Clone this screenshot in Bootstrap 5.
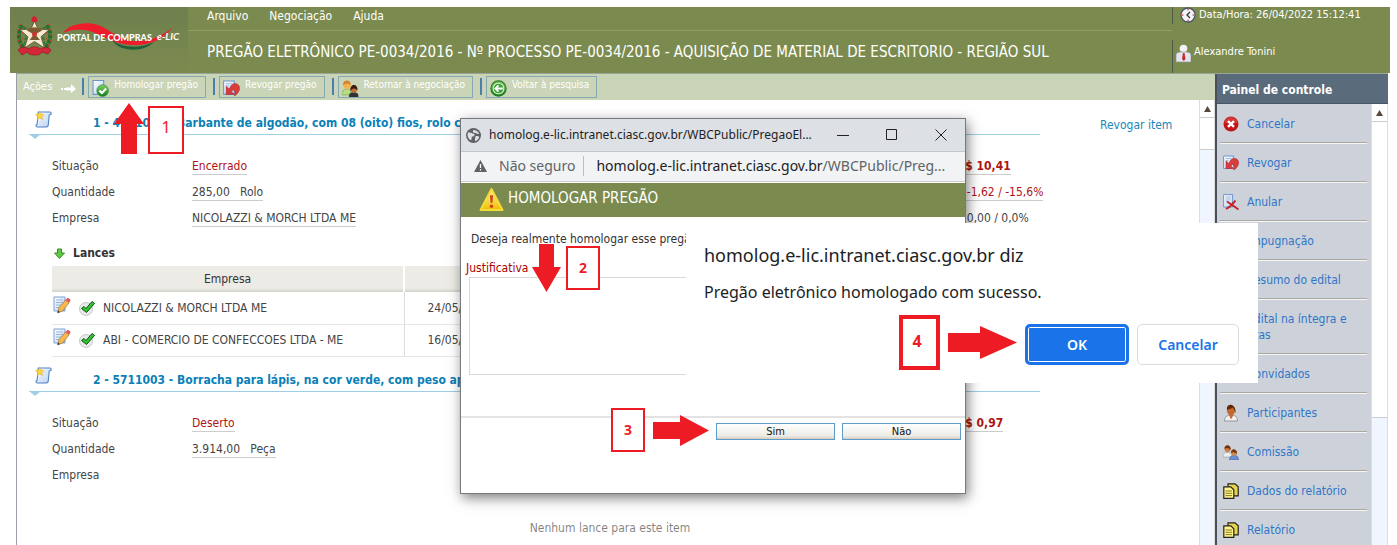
<!DOCTYPE html>
<html lang="pt-BR">
<head>
<meta charset="utf-8">
<meta name="viewport" content="width=device-width, initial-scale=1">
<title>Portal de Compras e-LIC</title>
<link href="https://cdn.jsdelivr.net/npm/bootstrap@5.3.0/dist/css/bootstrap.min.css" rel="stylesheet">
<style>
  body { font-family: "DejaVu Sans Condensed", "Noto Sans", sans-serif; font-size: 12px; line-height: 16px; color: #444; background: #fff; }
  a { text-decoration: none; }
  .page { padding: 7px 7px 0 10px; }
  .top { background: #7b8b4f; color: #fff; height: 66px; }
  .top a { color: #fff; }
  .brand-area { width: 178px; background: linear-gradient(#6f7f4e, #7b8b4f); }
  .menu { height: 24px; padding: 1px 19px 0; gap: 21px; border-bottom: 1px solid #90a062; }
  .headline { font-size: 15px; line-height: 22px; font-weight: 400; color: #fff; padding: 10px 19px 0; }
  .status-area { width: 218px; font-size: 11px; }
  .status-area > div { height: 33px; gap: 3px; }
  .status-area .tick { width: 1px; background: #4f5b48; }
  .frame { margin: 0 2px 0 6px; border-left: 1px solid #999ea8; border-top: 1px solid #9aa59a; }
  .toolbar { background: #cad5b7; height: 26px; color: #fff; padding: 2px 0 3px 6px; font-size: 11px; }
  .tool-sep { width: 2px; height: 17px; background: #4a7db0; margin: 0 4px 0 7px; }
  .tool-sep.first { margin-left: 5px; }
  .tool { font-size: 10px; line-height: 14px; color: #fff; background: transparent; border: 1px solid #85a9b4; height: 22px; padding: 1px 7px 0 3px; gap: 5px; white-space: nowrap; }
  .tool svg { margin-top: 2px; }
  .scroll-rail { background: #eff6ff; flex: none; border: 1px solid #ddd; border-width: 0 1px; }
  .rail-btn { height: 18px; border: 0; border-bottom: 1px solid #ccc; background: #fff; padding: 0; width: 100%; }
  .rail-btn svg { display: block; margin: auto; fill: #55483c; }
  .rail-thumb { background: #fff; border-bottom: 1px solid #ccc; }
  .sheet { padding: 0 0 0 12px; }
  .item-head { height: 35px; width: 1011px; border-bottom: 1px solid #9fcfe5; position: relative; }
  .item-head::after { content: ""; position: absolute; left: 0; top: 34px; border: 6px solid transparent; border-top: 5px solid #9fcfe5; border-bottom: 0; }
  .item-title { font-size: 12px; line-height: 16px; font-weight: 700; color: #0a80b8; margin: 0; padding: 8px 0 0 41px; white-space: nowrap; }
  .item-head svg { margin: 4px 0 0 6px; }
  .revoke { color: #1a86b8; padding: 17px 0 0 60px; }
  .facts { padding: 18px 0 0 23px; margin: 0; width: 1040px; }
  .facts > div { height: 26px; line-height: 26px; }
  .facts dt { width: 140px; font-weight: 400; }
  .facts dd { margin: 0; }
  .facts dd.main-val { width: 757px; }
  .facts span { display: inline-block; line-height: 15px; border-bottom: 1px solid #ccc; white-space: pre; }
  .facts .no-line { border: 0; }
  .alert-red { color: #b01414; }
  .lances { padding: 14px 0 5px 25px; font-weight: 700; color: #333; }
  .bids { width: 988px; margin: 0 0 0 23px; table-layout: fixed; }
  .bids th { font-weight: 400; text-align: center; background: linear-gradient(#ecebe6 86%, #d2d1c8); height: 26px; padding: 0; border-right: 2px solid #fff; color: #333; }
  .bids td { height: 32px; border-bottom: 1px solid #e6e6e6; border-right: 1px solid #ddd; padding: 0; vertical-align: middle; color: #444; }
  .bids td:last-child { border-right: 0; padding-left: 23px; }
  .bids td:first-child { padding-left: 1px; }
  .bids .edit-icon { margin-bottom: 6px; }
  .side { width: 173px; flex: none; border-left: 2px solid #4a4f5c; }
  .side-title { background: #5a6b7b; color: #fff; font-size: 12px; line-height: 16px; font-weight: 700; height: 30px; padding: 8px 0 0 5px; margin: 0; border-bottom: 1px solid #46556a; }
  .side-list { background: #cdd2da; padding: 1px 4px 0 3px; }
  .side-list a { color: #2f76c8; min-height: 37px; padding: 0 0 0 3px; gap: 8px; }
  .side-list li { border-bottom: 1px solid #aba99f; box-shadow: 0 1px #f5f5f5; margin-bottom: 1px; }
  .side-list a.tall { min-height: 53px; }
  .popup { left: 460px; top: 118px; width: 506px; height: 376px; background: #fff; border: 1px solid #75787d; box-shadow: 2px 4px 12px rgba(0,0,0,.5); z-index: 2; font-family: "Noto Sans", "DejaVu Sans", sans-serif; }
  .popup-bar { background: #dde0e5; height: 33px; color: #222; font-size: 12px; padding: 0 0 0 5px; border-bottom: 1px solid #c4c7cb; }
  .popup-bar button { background: none; border: 0; padding: 0; width: 49px; line-height: 12px; flex: none; }
  .address { background: #f1f3f4; height: 30px; border-bottom: 1px solid #ccc; font-size: 14px; color: #202124; padding: 0 14px 1px 13px; }
  .address .dim { color: #5f6368; }
  .popup-title { background: #7b8b4f; color: #fff; height: 34px; font: 400 15px/22px "DejaVu Sans Condensed", sans-serif; padding: 0 0 0 18px; margin: 1px 0 0; }
  .popup-form { font-family: "DejaVu Sans Condensed", sans-serif; }
  .popup-form p { padding: 14px 0 0 10px; margin: 0 0 13px; color: #333; font-size: 12px; }
  .popup-form label { color: #a00; padding-left: 5px; display: block; font-size: 12px; }
  .popup-form textarea { display: block; width: 488px; height: 98px; margin: 1px 0 41px 8px; border: 1px solid #d8d8d8; resize: none; }
  .popup-foot { border-top: 2px solid #e3e3e3; padding: 5px 4px 0 0; gap: 7px; }
  .classic { width: 119px; height: 17px; border: 1px solid #5e9bc8; background: linear-gradient(#fff, #ecebe5 80%, #d3cdc2); font-size: 11px; line-height: 14px; padding: 0; color: #111; }
  .js-alert { left: 686px; top: 223px; width: 572px; height: 160px; z-index: 3; background: #fff; color: #202124; padding: 20px 19px 0 18px; font-family: "Noto Sans", sans-serif; }
  .js-alert h2 { font-size: 18px; line-height: 24px; font-weight: 400; margin: 0 0 14px; }
  .js-alert p { font-size: 16px; line-height: 22px; margin: 0 0 21px; }
  .js-alert .btn { font-size: 14px; line-height: 20px; font-weight: 600; height: 41px; border-radius: 5px; width: 102px; padding: 0; }
  .js-alert .btn-ok { background: #1a73e8; color: #fff; box-shadow: inset 0 0 0 1px #fff; border: 3px solid #1a73e8; width: 104px; }
  .js-alert .btn-no { background: #fff; color: #1a73e8; border: 1px solid #dadce0; }
  .step { position: absolute; z-index: 4; border: 2px solid #ed1c24; background: #fff; color: #ed1c24; font: 700 14px "Noto Sans", sans-serif; display: flex; align-items: center; justify-content: center; width: 34px; height: 44px; padding-bottom: 2px; }
  .pointer { position: absolute; z-index: 4; fill: #ed1c24; }
  .s1 { left: 148px; top: 106px; width: 36px; height: 48px; padding-bottom: 6px; font-weight: 400; font-size: 16px; }
  .s2 { left: 566px; top: 246px; } .s3 { left: 611px; top: 408px; }
  .s4 { left: 899px; top: 315px; width: 41px; height: 55px; border-width: 4px; font-size: 16px; padding: 0 5px 4px 0; }
  .p1 { left: 114px; top: 103px; } .p2 { left: 532px; top: 244px; } .p3 { left: 653px; top: 415px; } .p4 { left: 948px; top: 326px; }
</style>
</head>
<body>
<svg width="0" height="0" class="position-absolute" aria-hidden="true">
  <defs>
    <linearGradient id="gGreen" x2="0" y2="1"><stop stop-color="#7fd067"/><stop offset="1" stop-color="#13801c"/></linearGradient>
    <linearGradient id="gDoc" x2="1" y2="1"><stop stop-color="#fff"/><stop offset="1" stop-color="#b7d0f4"/></linearGradient>
    <linearGradient id="gYel" x2="0" y2="1"><stop stop-color="#fff6a0"/><stop offset="1" stop-color="#efbe00"/></linearGradient>
  </defs>
  <symbol id="doc" viewBox="0 0 16 16"><path d="M1 1h10v12H1z" fill="url(#gDoc)" stroke="#6d94ce"/><path d="M3 4h6M3 6h6M3 8h6M3 10h4" stroke="#a5bde0"/></symbol>
  <symbol id="doc-ok" viewBox="0 0 16 16"><path d="M1 .5h10v13H1z" fill="url(#gDoc)" stroke="#6d94ce"/><circle cx="10" cy="10" r="5.500" fill="url(#gGreen)" stroke="#18811f" stroke-width=".5"/><path d="M7 10l2.300 2.300 4-4.300" fill="none" stroke="#fff" stroke-width="2"/></symbol>
  <symbol id="doc-undo" viewBox="0 0 16 16"><path d="M.6 1h10v12.500H.6z" fill="url(#gDoc)" stroke="#6d94ce"/><path d="M2.500 3.500h6M2.500 5.500h3" stroke="#a5bde0"/><path d="M3 6v7.500h7.500L8 11c1-2.500 4.500-2.500 2.800 4 6.700-4 6-12.500-.3-11.500C8.500 3.800 7 5.500 6 8.500z" fill="#d93c3c" stroke="#a81818" stroke-width=".5"/></symbol>
  <symbol id="doc-x" viewBox="0 0 16 16"><path d="M.6 .6h9v12.500h-9z" fill="url(#gDoc)" stroke="#6d94ce"/><path d="M2.500 3h5M2.500 5h5M2.500 7h3" stroke="#a5bde0"/><path d="M3 15c3-1.500 7-5 9.500-8.500M4 7.500c3 2 7 4.500 11.500 8" stroke="#c82020" stroke-width="1.900" fill="none"/></symbol>
  <symbol id="back" viewBox="0 0 16 16"><circle cx="8" cy="8" r="7.200" fill="url(#gGreen)" stroke="#2a7b24"/><circle cx="8" cy="8" r="5" fill="#3ea038" stroke="#d8f0d0"/><path d="M12 8H5M8 5L5 8l3 3" stroke="#fff" stroke-width="1.700" fill="none"/></symbol>
  <symbol id="man" viewBox="0 0 16 18"><path d="M1.500 17c0-4 2.500-6 6.500-6s6.500 2 6.500 6z" fill="#f0f0f0" stroke="#777" stroke-width=".7"/><path d="M6 11l2 4.500 2.500-4.500z" fill="#c56b2d"/><ellipse cx="8" cy="6.500" rx="4" ry="5" fill="#c4692c"/><path d="M4 6C2.500-1.500 13.500-1.500 12.500 9 11.500 6.500 11 4.500 9.500 3.500 8 5.500 6 4.500 4 6z" fill="#5f2809"/></symbol>
  <symbol id="pair" viewBox="0 0 16 16"><path d="M0 13c0-4 2-4.500 4.500-4.500S9 9 9 13z" fill="#eee" stroke="#888" stroke-width=".5"/><circle cx="4.500" cy="5" r="3" fill="#d07a38"/><path d="M1.500 5C1 0 8.500 0 7.500 6 6 4 4 3 1.500 5z" fill="#6b3210"/><path d="M6.500 16c0-4 2-4.500 4.500-4.500s4.500.5 4.500 4.500z" fill="#6b8fd0" stroke="#3b5a99" stroke-width=".5"/><circle cx="11" cy="9" r="2.800" fill="#d88a48"/><path d="M8 9c-.5-5 6.500-5 6 1-1.500-1-3-3-6-1z" fill="#7a3a14"/></symbol>
  <symbol id="pair-dark" viewBox="0 0 16 16"><path d="M0 14c0-4 2-5.500 4.500-5.500S9 10 9 14z" fill="#b5dd86" stroke="#6d9945" stroke-width=".5"/><circle cx="4.800" cy="5" r="3.500" fill="#f3b24c"/><path d="M1 5C.5-1 9-1 8 5 6 3 4 2.500 1 5z" fill="#d1812a"/><path d="M6.500 16c0-4 2-4.500 4.500-4.500s4.500.5 4.500 4.500z" fill="#333"/><circle cx="11" cy="9" r="3" fill="#bf6e38"/><path d="M8 10c-1-7 7.500-7 6.500 0-1.500-2-3.500-3-6.500 0z" fill="#3a1d0c"/></symbol>
  <symbol id="scroll" viewBox="0 0 16 16"><path d="M3 1h11c1.700 0 1.700 2.500 0 2.500h-.6L12.500 13c0 1.300-.8 2-2 2H2c-1.500 0-1.300-2.500 0-2.500z" fill="url(#gDoc)" stroke="#4d82c4"/><path d="M6 5h5M5 7.500h6M5 10h5" stroke="#d3e3fa"/><path d="M4.500 .5l1.200 2.500 2.800.3-2 2 .6 2.700-2.600-1.400L2 8l.5-2.700-2-2 2.800-.3z" fill="#ffd53e" stroke="#e2a614" stroke-width=".4"/></symbol>
  <symbol id="edit" viewBox="0 0 18 18"><path d="M1 1h11v14H1z" fill="url(#gDoc)" stroke="#7d9fd4"/><path d="M3 4h7M3 6.500h7M3 9h5M3 11.500h3" stroke="#9db8e0"/><path d="M4.500 17L6 11.500 12.500 4l3.500 3-6.500 8z" fill="#f5b84c" stroke="#94651c" stroke-width=".6"/><path d="M12.500 4l1.500-1.800c1.300-1 4 1 3.300 2.500L16 7z" fill="#e45b5b"/><path d="M4.500 17l.6-2.500 1.900 1.500z" fill="#333"/></symbol>
  <symbol id="check" viewBox="0 0 16 16"><circle cx="7" cy="9" r="6.500" fill="#e9e9e9" stroke="#c8c8c8"/><path d="M2.500 8.500L5 6.500l2 2L13 1.500 15.500 3.500 7.500 12.500z" fill="#2cc431" stroke="#0b5413"/></symbol>
  <symbol id="copies" viewBox="0 0 16 16"><path d="M5 .8h7l3.200 3v9H5z" fill="#e9d54d" stroke="#222" stroke-width="1.200"/><path d="M.8 3.800h7l3 3v8.500H.8z" fill="#fff48a" stroke="#222" stroke-width="1.200"/><path d="M2.500 8h6.500M2.500 10.300h6.500M2.500 12.600h6.500" stroke="#8a7a20"/></symbol>
  <symbol id="stop" viewBox="0 0 16 16"><circle cx="8" cy="8" r="7.500" fill="#c01818"/><path d="M8 1a7 7 0 0 1 6.500 6H1.500A7 7 0 0 1 8 1z" fill="#dd5050" opacity=".6"/><path d="M5 5.200l6 5.600M11 5.200l-6 5.600" stroke="#fff" stroke-width="2.400"/></symbol>
  <symbol id="warn" viewBox="0 0 24 24"><path d="M12 2L1.500 22h21z" fill="url(#gYel)" stroke="#f6d93a" stroke-width="2" stroke-linejoin="round"/><path d="M10.500 8h3l-.6 7h-1.800z" fill="#d2401c"/><circle cx="12" cy="18.500" r="1.700" fill="#d2401c"/></symbol>
  <symbol id="up" viewBox="0 0 7 6"><path d="M3.500 0L7 6H0z"/></symbol>
</svg>

<div class="page vh-100 overflow-hidden d-flex flex-column position-relative">
  <header class="top d-flex flex-shrink-0">
    <div class="brand-area flex-shrink-0">
      <svg width="178" height="66" viewBox="0 0 178 66" role="img" aria-label="Portal de Compras e-LIC">
        <g fill="none" stroke="#1f6a2d" stroke-width="4"><path d="M12 18C7 26 8 36 15 43M37 18c5 8 4 18-3 25" stroke-dasharray="4 1"/></g>
        <path d="M11 17C6 26 7 36 14 43M38 17c5 9 4 19-3 26M15 20c-3 5-3 12-1 17M34 20c3 5 3 12 1 17" fill="none" stroke="#d63a2c" stroke-width="1.500" stroke-dasharray="1.500 4"/>
        <path d="M9 19l9 3-4 17M40 19l-9 3 4 17" fill="none" stroke="#2c7a36" stroke-width="2" stroke-dasharray="3 1.500"/>
        <path d="M24.500 14l3.500 8 11 .8-8 7 3.500 11.200-10-6.500-10 6.500 3.500-11.200-8-7 11-.8z" fill="#f3ead0" stroke="#5b4a2c" stroke-width=".8"/>
        <path d="M17 23c3-3 12-3 15 0l-5 3h-5zM20 33l4.500-6 5 6" fill="#7a5a33" stroke="#8a6a3a"/><circle cx="24.500" cy="27" r="2.500" fill="#c4372e"/>
        <path d="M21.500 15c-.5-5 2-7 4.500-5 1.500 1 1.500 3 1 5z" fill="#d3202c"/>
        <path d="M8 43c3-4 8-3 11-1 2-3 9-3 11 0 4-2 9-2 11 1l-3 4-6-2c-2 3-4 3-7 3s-6 0-8-3l-5 3z" fill="#d3273a" stroke="#8c1520" stroke-width=".6"/>
        <path d="M102 33c10 8 28 9 42 2-12 12-36 9-42-2z" fill="#1f5f3a"/>
        <path d="M53 26C59 17 76 14 88 18c13 5 22 16 38 16 16 0 28-6 37-14-8 11-22 19-41 18-22-1-30-12-47-15-9-1-16 0-22 3z" fill="#ef1c2c"/>
        <text x="47" y="34" font-family="Lato, sans-serif" font-weight="900" font-size="9" fill="#fff">PORTAL DE COMPRAS</text>
        <text x="147" y="33" font-family="Lato, sans-serif" font-style="italic" font-weight="700" font-size="10" fill="#fff">e-LIC</text>
      </svg>
    </div>
    <div class="flex-grow-1 overflow-hidden">
      <nav class="menu d-flex"><a href="#">Arquivo</a><a href="#">Negociação</a><a href="#">Ajuda</a></nav>
      <h1 class="headline text-nowrap mb-0">PREGÃO ELETRÔNICO PE-0034/2016 - Nº PROCESSO PE-0034/2016 - AQUISIÇÃO DE MATERIAL DE ESCRITORIO - REGIÃO SUL</h1>
    </div>
    <div class="status-area flex-shrink-0">
      <div class="d-flex"><span class="tick mb-3"></span>
        <svg class="ms-1" width="16" height="16" viewBox="0 0 16 16"><circle cx="8" cy="8" r="7" fill="#f4f4f8" stroke="#4c5568" stroke-width="1.300"/><path d="M10 5L7 8l3 3" fill="none" stroke="#333" stroke-width="1.300"/><g fill="#d33"><circle cx="8" cy="2.800" r=".8"/><circle cx="8" cy="13.200" r=".8"/><circle cx="2.800" cy="8" r=".8"/><circle cx="13.200" cy="8" r=".8"/></g></svg>
        <span>Data/Hora: 26/04/2022 15:12:41</span></div>
      <div class="d-flex"><span class="tick"></span>
        <svg class="mt-1" width="15" height="19" viewBox="0 0 15 19"><circle cx="7.500" cy="4.500" r="3.800" fill="#f1f1f6"/><path d="M0 18V11c0-2 2-3 4.500-3h6C13 8 15 9 15 11v7z" fill="#e4e4ec" stroke="#8a8f92" stroke-width=".6"/><path d="M7 9h1.500l1 6-1.700 2L6 15z" fill="#c22838"/></svg>
        <span class="mt-1">Alexandre Tonini</span></div>
    </div>
  </header>

  <div class="frame d-flex flex-grow-1 overflow-hidden">
    <div class="flex-grow-1 d-flex flex-column overflow-hidden">
      <div class="toolbar d-flex align-items-center flex-shrink-0">
        <span>Ações</span>
        <svg class="ms-2" width="17" height="12" viewBox="0 0 17 12"><path d="M1 7h2v2H1zM4 7h2v2H4zM6 6.500h5V3l5 5-5 4V9.500H6z" fill="#fff"/></svg>
        <span class="tool-sep first"></span><button type="button" class="tool d-flex"><svg width="17" height="17"><use href="#doc-ok"/></svg>Homologar pregão</button>
        <span class="tool-sep"></span><button type="button" class="tool d-flex"><svg width="17" height="17"><use href="#doc-undo"/></svg>Revogar pregão</button>
        <span class="tool-sep"></span><button type="button" class="tool d-flex"><svg width="17" height="17"><use href="#pair-dark"/></svg>Retornar à negociação</button>
        <span class="tool-sep"></span><button type="button" class="tool d-flex"><svg width="17" height="17"><use href="#back"/></svg>Voltar à pesquisa</button>
      </div>
      <div class="d-flex flex-grow-1 overflow-hidden">
        <main class="sheet flex-grow-1 overflow-hidden">
          <div class="d-flex">
            <div class="item-head d-flex align-items-center flex-shrink-0"><svg width="17" height="17"><use href="#scroll"/></svg>
              <h2 class="item-title mt-1">1 - 4511003 - Barbante de algodão, com 08 (oito) fios, rolo com 500</h2></div>
            <a class="revoke text-nowrap" href="#">Revogar item</a>
          </div>
          <dl class="facts">
            <div class="d-flex"><dt>Situação</dt><dd class="main-val"><span class="alert-red">Encerrado</span></dd><dd class="alert-red fw-bold ps-2"><span>R$ 10,41</span></dd></div>
            <div class="d-flex"><dt>Quantidade</dt><dd class="main-val"><span>285,00   Rolo</span></dd><dd class="alert-red text-nowrap"><span>R$ -1,62 / -15,6%</span></dd></div>
            <div class="d-flex"><dt>Empresa</dt><dd class="main-val"><span>NICOLAZZI &amp; MORCH LTDA ME</span></dd><dd><span class="no-line">R$ 0,00 / 0,0%</span></dd></div>
          </dl>
          <div class="lances d-flex align-items-center gap-2"><svg width="11" height="11" viewBox="0 0 11 11"><path d="M3.500 1h4v4h3l-5 5.500L.5 5h3z" fill="#5fc943" stroke="#35912a"/></svg>Lances</div>
          <table class="bids">
            <colgroup><col width="352"><col></colgroup>
            <thead><tr><th scope="col">Empresa</th><th scope="col" aria-label="Data"></th></tr></thead>
            <tbody>
              <tr><td><div class="d-flex align-items-center gap-2"><svg width="18" height="18" class="edit-icon"><use href="#edit"/></svg><svg width="16" height="16"><use href="#check"/></svg>NICOLAZZI &amp; MORCH LTDA ME</div></td><td>24/05/2016</td></tr>
              <tr><td><div class="d-flex align-items-center gap-2"><svg width="18" height="18" class="edit-icon"><use href="#edit"/></svg><svg width="16" height="16"><use href="#check"/></svg>ABI - COMERCIO DE CONFECCOES LTDA - ME</div></td><td>16/05/2016</td></tr>
            </tbody>
          </table>
          <div class="item-head d-flex align-items-center"><svg width="17" height="17"><use href="#scroll"/></svg>
            <h2 class="item-title mt-1">2 - 5711003 - Borracha para lápis, na cor verde, com peso aproximado</h2></div>
          <dl class="facts">
            <div class="d-flex"><dt>Situação</dt><dd class="main-val"><span class="alert-red">Deserto</span></dd><dd class="alert-red fw-bold ps-2"><span>R$ 0,97</span></dd></div>
            <div class="d-flex"><dt>Quantidade</dt><dd class="main-val"><span>3.914,00   Peça</span></dd></div>
            <div class="d-flex"><dt>Empresa</dt></div>
          </dl>
          <p class="text-center mt-4 pt-2 pe-2 text-black-50">Nenhum lance para este item</p>
        </main>
        <div class="scroll-rail" style="width:16px"><button type="button" class="rail-btn d-block" aria-label="Rolar para cima"><svg width="7" height="6"><use href="#up"/></svg></button><div class="rail-thumb" style="height:32px"></div></div>
      </div>
    </div>
    <aside class="side d-flex flex-column">
      <h2 class="side-title flex-shrink-0">Painel de controle</h2>
      <div class="d-flex flex-grow-1 overflow-hidden">
        <ul class="side-list list-unstyled mb-0 flex-grow-1">
          <li><a class="d-flex align-items-center" href="#"><svg class="flex-shrink-0" width="16" height="16"><use href="#stop"/></svg>Cancelar</a></li>
          <li><a class="d-flex align-items-center" href="#"><svg class="flex-shrink-0" width="16" height="16"><use href="#doc-undo"/></svg>Revogar</a></li>
          <li><a class="d-flex align-items-center" href="#"><svg class="flex-shrink-0" width="16" height="16"><use href="#doc-x"/></svg>Anular</a></li>
          <li><a class="d-flex align-items-center" href="#"><svg class="flex-shrink-0" width="16" height="16"><use href="#doc"/></svg>Impugnação</a></li>
          <li><a class="d-flex align-items-center" href="#"><svg class="flex-shrink-0" width="16" height="16"><use href="#doc"/></svg>Resumo do edital</a></li>
          <li><a class="d-flex align-items-center tall" href="#"><svg class="flex-shrink-0" width="16" height="16"><use href="#doc"/></svg><span>Edital na íntegra e<br>Atas</span></a></li>
          <li><a class="d-flex align-items-center" href="#"><svg class="flex-shrink-0" width="16" height="18"><use href="#man"/></svg>Convidados</a></li>
          <li><a class="d-flex align-items-center" href="#"><svg class="flex-shrink-0" width="16" height="18"><use href="#man"/></svg>Participantes</a></li>
          <li><a class="d-flex align-items-center" href="#"><svg class="flex-shrink-0" width="16" height="16"><use href="#pair"/></svg>Comissão</a></li>
          <li><a class="d-flex align-items-center" href="#"><svg class="flex-shrink-0" width="16" height="16"><use href="#copies"/></svg>Dados do relatório</a></li>
          <li><a class="d-flex align-items-center" href="#"><svg class="flex-shrink-0" width="16" height="16"><use href="#copies"/></svg>Relatório</a></li>
        </ul>
        <div class="scroll-rail" style="width:17px"><button type="button" class="rail-btn d-block" aria-label="Rolar painel para cima"><svg width="7" height="6"><use href="#up"/></svg></button><div class="rail-thumb" style="height:296px"></div></div>
      </div>
    </aside>
  </div>

  <section class="popup position-absolute" aria-label="Homologar pregão">
    <div class="popup-bar d-flex align-items-center">
      <svg class="me-2 flex-shrink-0" width="15" height="15" viewBox="0 0 16 16"><circle cx="8" cy="8" r="8" fill="#5f6368"/><path d="M2 5c3-1 4 1 6 1s1 3-1 3 0 3-2 4C2 11 1 8 2 5zM8 2c3 0 5 2 6 4-2 1-3-1-5-1S7 3 8 2zM10 9c2-1 4 0 4 1-1 2-2 3-4 4-1-2 0-3 0-5z" fill="#dfe1e5"/></svg>
      <span class="text-nowrap flex-grow-1">homolog.e-lic.intranet.ciasc.gov.br/WBCPublic/PregaoEl...</span>
      <button type="button" aria-label="Minimizar"><svg width="12" height="12"><path d="M0 6.500h12" stroke="#222"/></svg></button>
      <button type="button" aria-label="Maximizar"><svg width="12" height="12"><path d="M.5.500h10v10H.5z" fill="none" stroke="#222"/></svg></button>
      <button type="button" aria-label="Fechar"><svg width="12" height="12"><path d="M.5.500l11 11M11.500.500l-11 11" stroke="#222"/></svg></button>
    </div>
    <div class="address d-flex align-items-center text-nowrap">
      <svg class="me-2 flex-shrink-0" width="13" height="12" viewBox="0 0 13 12"><path d="M6.500 0L13 12H0z" fill="#5f6368"/><path d="M6.500 4v4M6.500 9v1.500" stroke="#fff" stroke-width="1.300"/></svg>
      <span class="dim ms-1">Não seguro</span><span class="vr ms-2 me-2 my-1"></span><span class="ps-1">homolog.e-lic.intranet.ciasc.gov.br<span class="dim">/WBCPublic/Preg...</span></span>
    </div>
    <h2 class="popup-title d-flex"><svg class="mt-1 me-1 flex-shrink-0" width="25" height="25"><use href="#warn"/></svg><span class="mt-1">HOMOLOGAR PREGÃO</span></h2>
    <form class="popup-form">
      <p>Deseja realmente homologar esse pregão?</p>
      <label for="just">Justificativa</label>
      <textarea id="just"></textarea>
      <div class="popup-foot d-flex justify-content-end"><button type="button" class="classic">Sim</button><button type="button" class="classic">Não</button></div>
    </form>
  </section>

  <section class="js-alert position-absolute" role="alertdialog" aria-labelledby="alTitle">
    <h2 id="alTitle">homolog.e-lic.intranet.ciasc.gov.br diz</h2>
    <p>Pregão eletrônico homologado com sucesso.</p>
    <div class="d-flex justify-content-end gap-2"><button type="button" class="btn btn-ok">OK</button><button type="button" class="btn btn-no">Cancelar</button></div>
  </section>

  <svg class="pointer p1" width="30" height="51"><path d="M15 0l15 21h-7v30H7V21H0z"/></svg><div class="step s1">1</div>
  <svg class="pointer p2" width="30" height="48"><path d="M7 0h15v23h7L14.500 48 0 23h7z"/></svg><div class="step s2">2</div>
  <svg class="pointer p3" width="57" height="32"><path d="M0 7h27V0l29 15.500L27 31v-7H0z"/></svg><div class="step s3">3</div>
  <svg class="pointer p4" width="70" height="34"><path d="M0 7h32V0l37 16.500L32 33v-7H0z"/></svg><div class="step s4">4</div>
</div>
<script src="https://cdn.jsdelivr.net/npm/bootstrap@5.3.0/dist/js/bootstrap.bundle.min.js"></script>
</body>
</html>
